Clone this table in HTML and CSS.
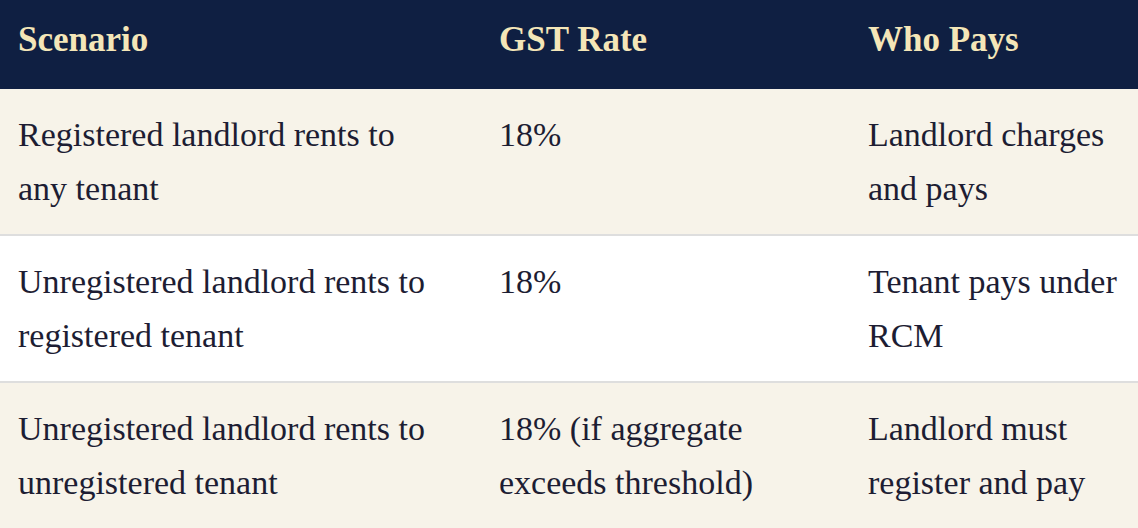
FILE: index.html
```html
<!DOCTYPE html>
<html lang="en">
<head>
<meta charset="utf-8">
<title>GST on Rent</title>
<link rel="stylesheet" href="styles.css">
</head>
<body>
<table class="gst-table">
  <colgroup>
    <col class="col-scenario">
    <col class="col-rate">
    <col class="col-payer">
  </colgroup>
  <thead>
    <tr>
      <th class="cell-first">Scenario</th>
      <th>GST Rate</th>
      <th class="cell-last">Who Pays</th>
    </tr>
  </thead>
  <tbody>
    <tr class="row-tint">
      <td class="cell-first">Registered landlord rents to any tenant</td>
      <td>18%</td>
      <td class="cell-last">Landlord charges and pays</td>
    </tr>
    <tr class="row-plain">
      <td class="cell-first">Unregistered landlord rents to registered tenant</td>
      <td>18%</td>
      <td class="cell-last">Tenant pays under RCM</td>
    </tr>
    <tr class="row-tint">
      <td class="cell-first">Unregistered landlord rents to unregistered tenant</td>
      <td>18% (if aggregate exceeds threshold)</td>
      <td class="cell-last">Landlord must register and pay</td>
    </tr>
  </tbody>
</table>
</body>
</html>
```

FILE: styles.css
```css
html, body {
  margin: 0;
  padding: 0;
  background: #ffffff;
}

body {
  font-family: "Liberation Serif", "Times New Roman", serif;
  color: #1d1d33;
  overflow: hidden;
}

.gst-table {
  width: 1138px;
  border-collapse: collapse;
  table-layout: fixed;
}

.col-scenario { width: 481px; }
.col-rate { width: 369px; }
.col-payer { width: 288px; }

.gst-table th {
  background: #0f1f42;
  color: #f4e6b8;
  font-weight: bold;
  font-size: 35px;
  line-height: 53px;
  text-align: left;
  padding: 13px 18px 23px 18px;
}

.gst-table td {
  font-size: 34px;
  line-height: 53.5px;
  text-align: left;
  vertical-align: top;
  padding: 19px 18px;
  border-bottom: 2px solid #dedede;
}

.gst-table .cell-first { padding-right: 44px; }
.gst-table .cell-last { padding-right: 0; }

.row-tint td { background: #f7f3e9; }
.row-plain td { background: #ffffff; }
```
